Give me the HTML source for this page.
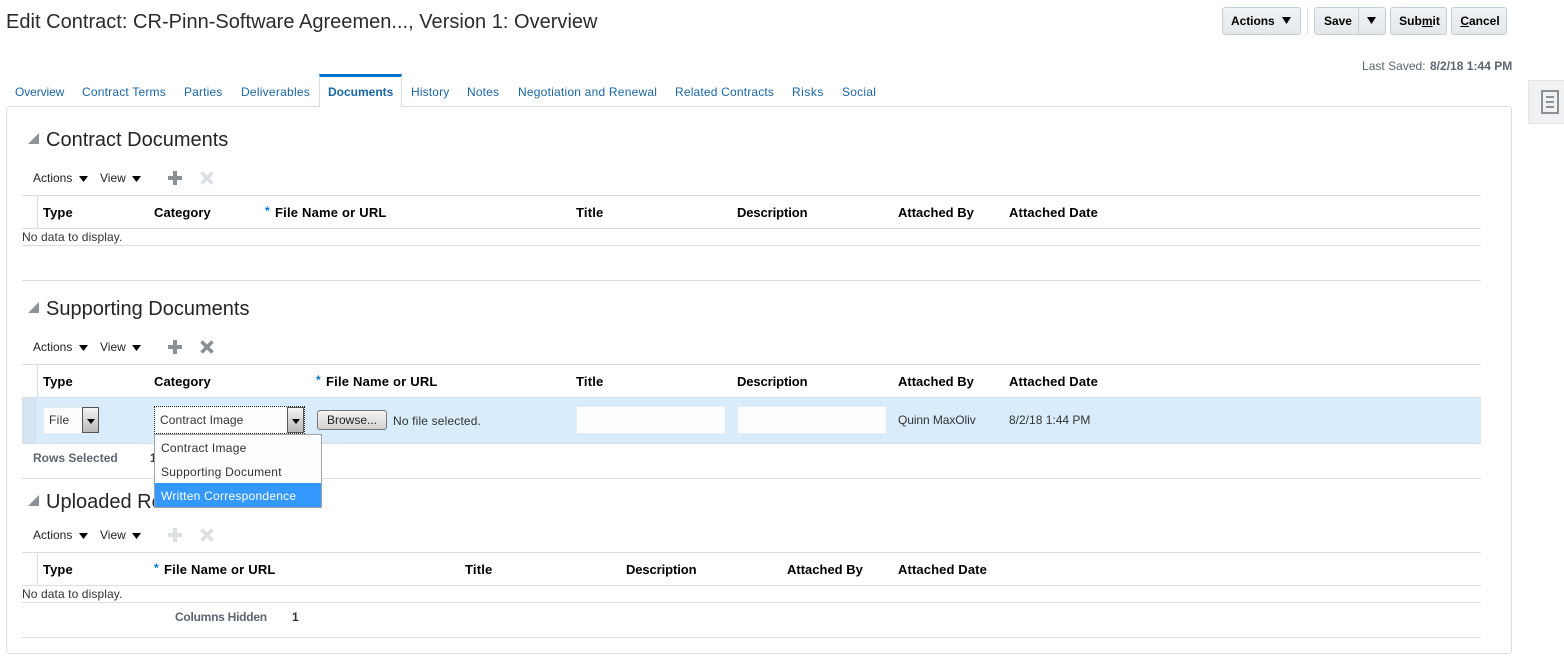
<!DOCTYPE html>
<html><head><meta charset="utf-8"><style>
html,body{margin:0;padding:0;background:#fff}
#p{position:relative;width:1564px;height:666px;overflow:hidden;font-family:"Liberation Sans",Arial,sans-serif;font-size:12px;color:#333}
#p div,#p svg{position:absolute}
.t{white-space:nowrap;line-height:16px;height:16px}
.tab{color:#1a66a6;top:84px}
.h{font-size:20px;line-height:24px;height:24px;color:#252525;left:46px}
.th{font-weight:bold;font-size:13px;color:#000;letter-spacing:.1px}
.ln{left:22px;width:1459px;height:1px;background:#d6dfe6}
.tri{width:0;height:0;left:28px;border-left:11px solid transparent;border-bottom:11px solid #8d9399}
.dn{width:9px;height:6px;background:#000;clip-path:polygon(0 0,100% 0,50% 100%)}
.btn{background:linear-gradient(#f0f3f5,#e4e8ea);border:1px solid #c4ced7;border-radius:3px;top:7px;height:28px;box-sizing:border-box;font-weight:bold;color:#000;text-align:center;line-height:27px}
.sel{box-sizing:border-box;background:linear-gradient(#f4f4f4,#b8b8b8);border:1px solid #555}
.inp{background:#fcfdfe;border:1px solid #e4ecf2;box-sizing:border-box}
.opt{left:161px;letter-spacing:.25px;color:#333}
</style></head><body><div id="p">
<div class="t" style="left:6px;top:10px;font-size:20px;line-height:24px;height:24px;color:#2b2b2b;letter-spacing:.02px">Edit Contract: CR-Pinn-Software Agreemen..., Version 1: Overview</div>

<div class="btn" style="left:1222px;width:79px;text-align:left;padding-left:8px;letter-spacing:-.05px">Actions</div><div class="dn" style="left:1282px;top:17px;height:7px"></div>
<div style="left:1307px;top:7px;width:1px;height:28px;background:#dfe4e8"></div>
<div class="btn" style="left:1314px;width:72px;text-align:left;padding-left:9px;letter-spacing:-.05px">Save</div><div style="left:1358px;top:8px;width:1px;height:26px;background:#c4ced7"></div><div class="dn" style="left:1367px;top:17px;height:7px"></div>
<div class="btn" style="left:1390px;width:57px;padding-left:2px">Sub<u>m</u>it</div>
<div class="btn" style="left:1451px;width:56px;padding-left:2px"><u>C</u>ancel</div>
<div class="t" style="left:1362px;top:58px;color:#5c6670;letter-spacing:.02px">Last Saved: <b style="margin-left:1px">8/2/18 1:44 PM</b></div>

<div style="left:1528px;top:80px;width:36px;height:44px;background:#f0f1f2;border:1px solid #e2e5e8;border-right:0;box-sizing:border-box"></div>
<svg style="left:1541px;top:90px" width="18" height="24" viewBox="0 0 18 24" fill="none" stroke="#8b9095" stroke-width="2"><rect x="1" y="1" width="16" height="22"/><path d="M5 7h8M5 12h8M5 17h8"/></svg>

<div style="left:6px;top:106px;width:1506px;height:548px;box-sizing:border-box;border:1px solid #d6dfe6;border-radius:3px"></div>

<div class="t tab" style="left:15px;letter-spacing:-.1px">Overview</div>
<div class="t tab" style="left:82px;letter-spacing:.2px">Contract Terms</div>
<div class="t tab" style="left:184px;letter-spacing:.15px">Parties</div>
<div class="t tab" style="left:241px;letter-spacing:.25px">Deliverables</div>
<div style="left:319px;top:74px;width:83px;height:33px;box-sizing:border-box;background:#fff;border:1px solid #d6dfe6;border-top:3px solid #0572ce;border-bottom:0"></div>
<div class="t tab" style="left:328px;font-weight:bold">Documents</div>
<div class="t tab" style="left:411px;letter-spacing:.15px">History</div>
<div class="t tab" style="left:467px;letter-spacing:.15px">Notes</div>
<div class="t tab" style="left:518px;letter-spacing:.22px">Negotiation and Renewal</div>
<div class="t tab" style="left:675px;letter-spacing:.18px">Related Contracts</div>
<div class="t tab" style="left:792px;letter-spacing:.5px">Risks</div>
<div class="t tab" style="left:842px;letter-spacing:.25px">Social</div>

<!-- Section 1 -->
<div class="tri" style="top:133px"></div>
<div class="t h" style="top:128px">Contract Documents</div>
<div class="t" style="left:33px;top:170px;color:#222">Actions</div><div class="dn" style="left:79px;top:176px"></div>
<div class="t" style="left:100px;top:170px;color:#222">View</div><div class="dn" style="left:132px;top:176px"></div>
<svg style="left:168px;top:171px" width="14" height="14"><path d="M5 0h4v5h5v4H9v5H5V9H0V5h5z" fill="#8b9095"/></svg>
<svg style="left:200px;top:171px" width="14" height="14"><path d="M1.5 1.5l11 11M12.5 1.5l-11 11" stroke="#dcdfe2" stroke-width="3.6"/></svg>
<div class="ln" style="top:195px"></div>
<div style="left:37px;top:195px;width:1px;height:33px;background:#d6dfe6"></div>
<div class="t th" style="left:43px;top:205px">Type</div>
<div class="t th" style="left:154px;top:205px;letter-spacing:.05px">Category</div>
<div class="t" style="left:265px;top:203px;color:#0572ce;font-weight:bold">*</div>
<div class="t th" style="left:275px;top:205px;letter-spacing:.2px">File Name or URL</div>
<div class="t th" style="left:576px;top:205px;letter-spacing:.2px">Title</div>
<div class="t th" style="left:737px;top:205px;letter-spacing:-.1px">Description</div>
<div class="t th" style="left:898px;top:205px;letter-spacing:0">Attached By</div>
<div class="t th" style="left:1009px;top:205px;letter-spacing:.12px">Attached Date</div>
<div class="ln" style="top:228px"></div>
<div class="t" style="left:22px;top:229px;letter-spacing:.1px">No data to display.</div>
<div class="ln" style="top:245px"></div>
<div class="ln" style="top:280px"></div>

<!-- Section 2 -->
<div class="tri" style="top:302px"></div>
<div class="t h" style="top:297px">Supporting Documents</div>
<div class="t" style="left:33px;top:339px;color:#222">Actions</div><div class="dn" style="left:79px;top:345px"></div>
<div class="t" style="left:100px;top:339px;color:#222">View</div><div class="dn" style="left:132px;top:345px"></div>
<svg style="left:168px;top:340px" width="14" height="14"><path d="M5 0h4v5h5v4H9v5H5V9H0V5h5z" fill="#8b9095"/></svg>
<svg style="left:200px;top:340px" width="14" height="14"><path d="M1.5 1.5l11 11M12.5 1.5l-11 11" stroke="#8b9095" stroke-width="3.6"/></svg>
<div class="ln" style="top:364px"></div>
<div style="left:37px;top:364px;width:1px;height:33px;background:#d6dfe6"></div>
<div class="t th" style="left:43px;top:374px">Type</div>
<div class="t th" style="left:154px;top:374px;letter-spacing:.05px">Category</div>
<div class="t" style="left:316px;top:372px;color:#0572ce;font-weight:bold">*</div>
<div class="t th" style="left:326px;top:374px;letter-spacing:.2px">File Name or URL</div>
<div class="t th" style="left:576px;top:374px;letter-spacing:.2px">Title</div>
<div class="t th" style="left:737px;top:374px;letter-spacing:-.1px">Description</div>
<div class="t th" style="left:898px;top:374px;letter-spacing:0">Attached By</div>
<div class="t th" style="left:1009px;top:374px;letter-spacing:.12px">Attached Date</div>
<div class="ln" style="top:397px"></div>
<div style="left:22px;top:398px;width:1459px;height:45px;background:#d9ecfc"></div>
<div style="left:22px;top:398px;width:15px;height:45px;background:#d5e4f2"></div>
<div style="left:37px;top:398px;width:1px;height:45px;background:#e6f1fa"></div>
<div class="ln" style="top:443px"></div>

<div class="inp" style="left:43px;top:407px;width:56px;height:27px;border-radius:2px"></div>
<div class="t" style="left:49px;top:412px;letter-spacing:.3px">File</div>
<div class="sel" style="left:82px;top:407px;width:17px;height:26px"></div>
<svg style="left:87px;top:419px" width="8" height="5"><path d="M0 0h8L4 5z" fill="#000"/></svg>

<div class="inp" style="left:154px;top:406px;width:151px;height:28px;border:1px dotted #222"></div>
<div class="t" style="left:160px;top:412px;letter-spacing:.1px">Contract Image</div>
<div class="sel" style="left:287px;top:407px;width:17px;height:26px"></div>
<svg style="left:292px;top:419px" width="8" height="5"><path d="M0 0h8L4 5z" fill="#000"/></svg>

<div style="left:317px;top:410px;width:70px;height:20px;box-sizing:border-box;border:1px solid #777;border-radius:3px;background:linear-gradient(#f6f6f6,#cfcfcf);text-align:center;line-height:19px;color:#222">Browse...</div>
<div class="t" style="left:393px;top:413px;color:#333;letter-spacing:.16px">No file selected.</div>
<div class="inp" style="left:576px;top:406px;width:150px;height:28px"></div>
<div class="inp" style="left:737px;top:406px;width:150px;height:28px"></div>
<div class="t" style="left:898px;top:412px;letter-spacing:-.08px">Quinn MaxOliv</div>
<div class="t" style="left:1009px;top:412px">8/2/18 1:44 PM</div>

<div class="t" style="left:33px;top:450px;font-weight:bold;color:#5c6670">Rows Selected</div>
<div class="t" style="left:150px;top:450px;font-weight:bold;color:#333">1</div>
<div class="ln" style="top:478px"></div>

<!-- Section 3 -->
<div class="tri" style="top:495px"></div>
<div class="t h" style="top:490px">Uploaded Records</div>
<div class="t" style="left:33px;top:527px;color:#222">Actions</div><div class="dn" style="left:79px;top:533px"></div>
<div class="t" style="left:100px;top:527px;color:#222">View</div><div class="dn" style="left:132px;top:533px"></div>
<svg style="left:168px;top:528px" width="14" height="14"><path d="M5 0h4v5h5v4H9v5H5V9H0V5h5z" fill="#dcdfe2"/></svg>
<svg style="left:200px;top:528px" width="14" height="14"><path d="M1.5 1.5l11 11M12.5 1.5l-11 11" stroke="#dcdfe2" stroke-width="3.6"/></svg>
<div class="ln" style="top:552px"></div>
<div style="left:37px;top:552px;width:1px;height:33px;background:#d6dfe6"></div>
<div class="t th" style="left:43px;top:562px">Type</div>
<div class="t" style="left:154px;top:560px;color:#0572ce;font-weight:bold">*</div>
<div class="t th" style="left:164px;top:562px;letter-spacing:.2px">File Name or URL</div>
<div class="t th" style="left:465px;top:562px;letter-spacing:.2px">Title</div>
<div class="t th" style="left:626px;top:562px;letter-spacing:-.1px">Description</div>
<div class="t th" style="left:787px;top:562px;letter-spacing:0">Attached By</div>
<div class="t th" style="left:898px;top:562px;letter-spacing:.12px">Attached Date</div>
<div class="ln" style="top:585px"></div>
<div class="t" style="left:22px;top:586px;letter-spacing:.1px">No data to display.</div>
<div class="ln" style="top:602px"></div>
<div class="t" style="left:175px;top:609px;font-weight:bold;color:#5c6670;letter-spacing:-.25px">Columns Hidden</div>
<div class="t" style="left:292px;top:609px;font-weight:bold;color:#333">1</div>
<div class="ln" style="top:637px"></div>

<!-- Dropdown -->
<div style="left:154px;top:434px;width:168px;height:74px;box-sizing:border-box;background:#fcfdfe;border:1px solid #a0a4a8"></div>
<div style="left:155px;top:483px;width:166px;height:24px;background:#3399ff"></div>
<div class="t opt" style="top:440px">Contract Image</div>
<div class="t opt" style="top:464px">Supporting Document</div>
<div class="t opt" style="top:488px;color:#fff">Written Correspondence</div>
</div></body></html>
